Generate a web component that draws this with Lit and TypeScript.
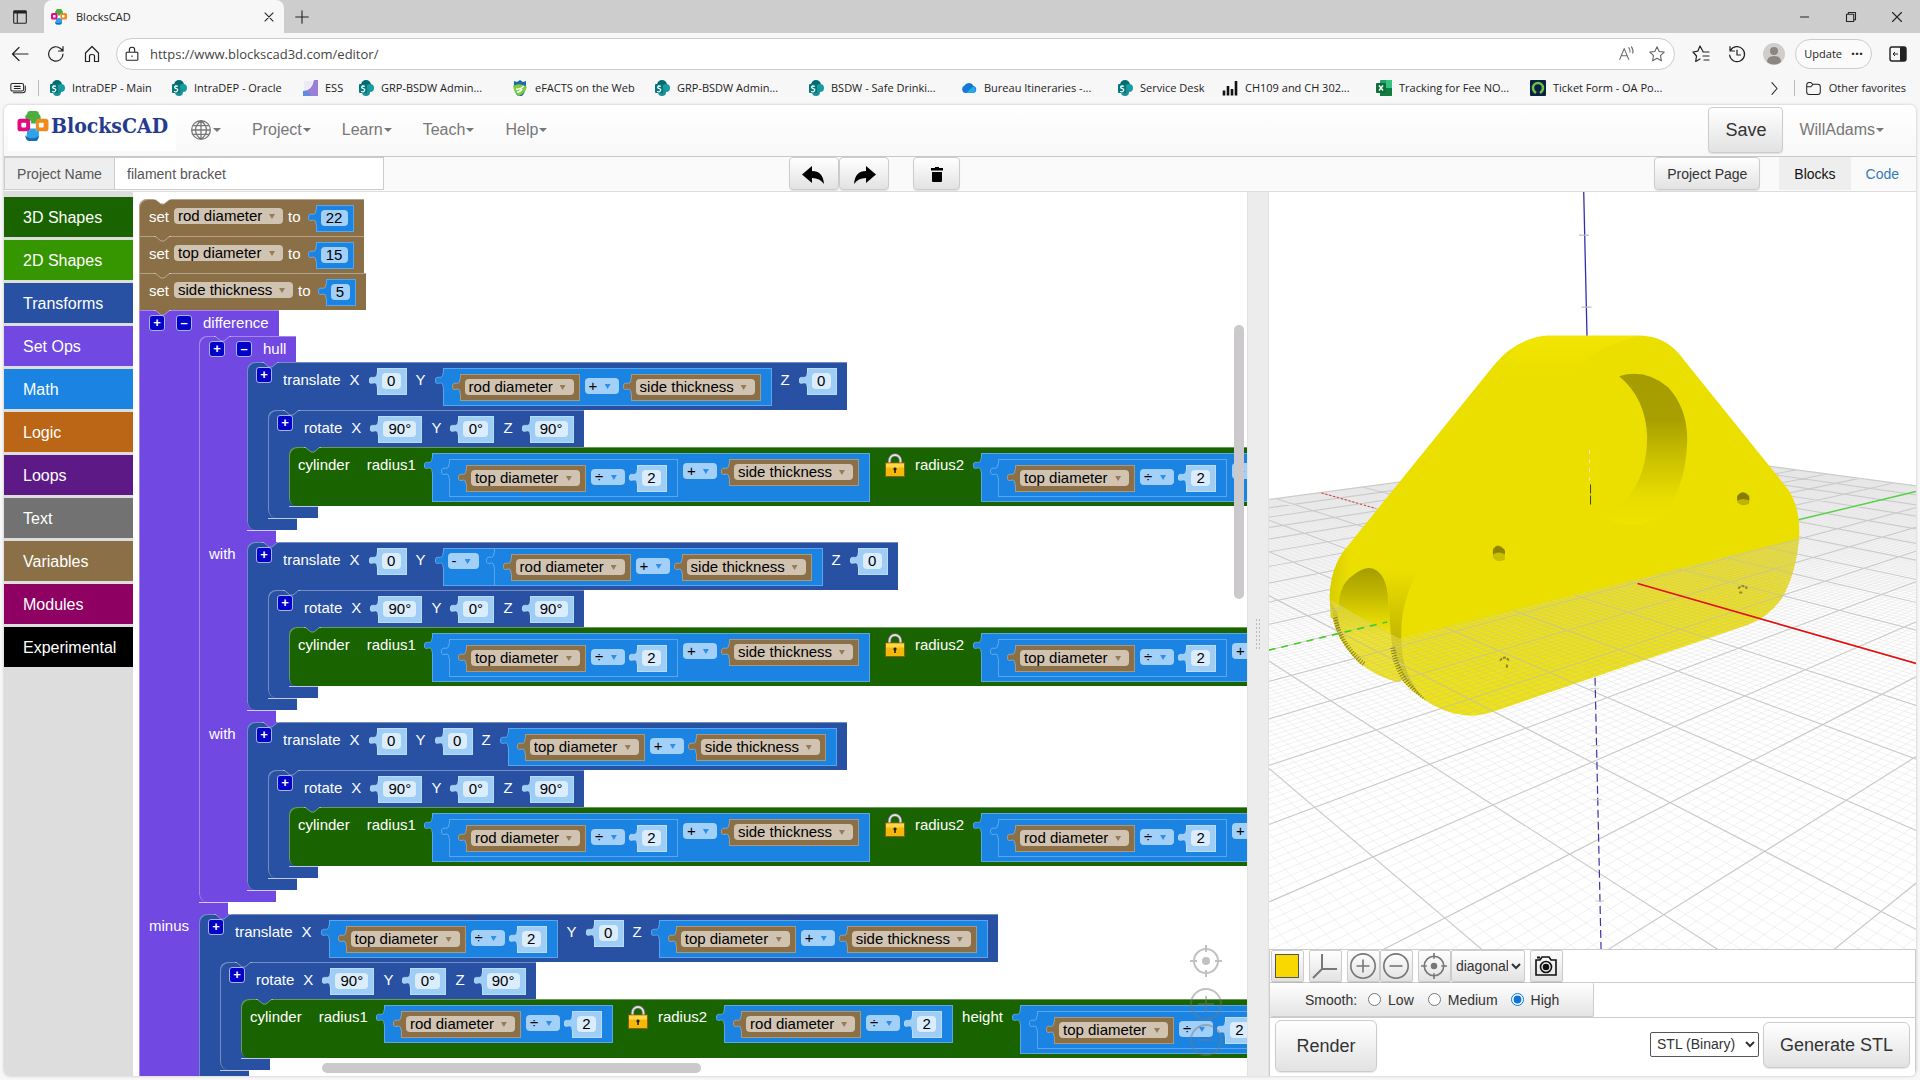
import { LitElement, html, svg, css, TemplateResult } from "lit";
import { customElement } from "lit/decorators.js";
import { styleMap } from "lit/directives/style-map.js";

type T = TemplateResult;

/* ---------- icons ---------- */
const logoMark = html`<svg class="mark" viewBox="0 0 32 32" aria-hidden="true">
  <path d="M10 3q0-3 3-3h6q3 0 3 3 2 1 2 4t-3 3h-2v3h-5v-3h-3q-3-1-3-4 0-2 2-3z" fill="#4aae3f"/>
  <rect x="0" y="8" width="13" height="13" rx="3" fill="#e5097f"/><rect x="4" y="12" width="5" height="5" rx="1" fill="#fff"/>
  <rect x="19" y="8" width="13" height="13" rx="3" fill="#f08a1c"/><rect x="22" y="12" width="5" height="5" rx="1" fill="#fff"/>
  <path d="M10 20h3v-2h6v2h3v7q-1 4-3 4h-6q-3 0-4-3z" fill="#2ea3e8"/><path d="M8 25q2 3 7 3t7-3q-1 6-4 6h-6q-4-1-4-6z" fill="#1c6ab5"/>
</svg>`;
const sharepoint = html`<svg class="fav" viewBox="0 0 16 16"><circle cx="8" cy="5" r="5" fill="#036c70"/><circle cx="12" cy="8" r="4" fill="#1a9ba1"/><circle cx="8" cy="12" r="4" fill="#1a8f94"/><rect x="1" y="4" width="8" height="9" rx="1" fill="#03787c"/><path d="M6.800 6.400q-2.600-1-3 .4t1.600 1.800 1 2.200-3.200.4" fill="none" stroke="#fff" stroke-width="1.300"/></svg>`;
const ess = html`<svg class="fav" viewBox="0 0 16 16"><path d="M12 0h4v16H1V11q9 0 11-11z" fill="#9a7fd6"/><path d="M1 11q6 0 8 5H1z" fill="#5d8de0"/><path d="M2 1l9 0Q9 9 2 10z" fill="#eceaf8"/></svg>`;
const efacts = html`<svg class="fav" viewBox="0 0 16 16"><path d="M2 1l3 1 3-2 3 2 3-1v4q0 7-4 11H6Q1 12 2 1z" fill="#1d6cab"/><path d="M1 6q7-4 14 1-2 6-8 9-5-3-6-10z" fill="#7fce3c"/><path d="M4 9q4 1 8-3M5 12q3 0 5-3" fill="none" stroke="#fff" stroke-width="1.500"/></svg>`;
const cloud = html`<svg class="fav" viewBox="0 0 16 16"><path d="M4 13a4 4 0 0 1-.5-7.500A5 5 0 0 1 12.500 6 3.600 3.600 0 0 1 12.500 13z" fill="#1478d4"/><path d="M5 13l7-6.500a3.500 3.500 0 0 1 .8 6.500z" fill="#28a8ea"/></svg>`;
const bars = html`<svg class="fav" viewBox="0 0 16 16"><path d="M2 15.500v-5M6 15.500V6M10 15.500V9M14 15.500V1" stroke="#111" stroke-width="2.600"/></svg>`;
const excel = html`<svg class="fav" viewBox="0 0 16 16"><rect x="4" y="0" width="12" height="16" rx="1" fill="#21a366"/><path d="M10 0h5q1 0 1 1v7h-6z" fill="#33c481"/><path d="M4 8h12v7q0 1-1 1H4z" fill="#107c41"/><rect x="0" y="3" width="10" height="10" rx="1" fill="#0f703b"/><path d="M3 5.500l4 5M7 5.500l-4 5" stroke="#fff" stroke-width="1.500"/></svg>`;
const okta = html`<svg class="fav" viewBox="0 0 16 16"><rect width="16" height="16" rx="1" fill="#0c2340"/><path d="M6 13Q3 11 3 8a5 5 0 0 1 10 0q0 3-3 5" fill="none" stroke="#6cc24a" stroke-width="2.400"/></svg>`;
const line = (d: string, cls = "ic") => html`<svg class=${cls} viewBox="0 0 20 20" fill="none" stroke="currentColor" stroke-width="1.200" stroke-linecap="round" stroke-linejoin="round" aria-hidden="true"><path d=${d}/></svg>`;
const targetIcon = html`<svg class="ctl" viewBox="0 0 32 32" fill="none" stroke="currentColor" stroke-width="2"><circle cx="16" cy="16" r="12"/><circle cx="16" cy="16" r="4" fill="currentColor" stroke="none"/><path d="M16 0v7M16 25v7M0 16h7M25 16h7"/></svg>`;
const plusIcon = html`<svg class="ctl" viewBox="0 0 32 32" fill="none" stroke="currentColor" stroke-width="2"><circle cx="16" cy="16" r="15"/><path d="M16 8v16M8 16h16"/></svg>`;
const minusIcon = html`<svg class="ctl" viewBox="0 0 32 32" fill="none" stroke="currentColor" stroke-width="2"><circle cx="16" cy="16" r="15"/><path d="M8 16h16"/></svg>`;
const padlock = html`<svg class="lock" viewBox="0 0 20 24" role="img" aria-label="locked"><path d="M4.500 13V7.500a5.500 5.500 0 0 1 11 0V13" fill="none" stroke="#6d6d6d" stroke-width="3.400"/><path d="M4.500 13V7.500a5.500 5.500 0 0 1 11 0V13" fill="none" stroke="#e2e2e2" stroke-width="1.800"/><rect x=".5" y="10" width="19" height="13.500" fill="#f5b70a" stroke="#8a6100"/><rect x="1" y="10.500" width="18" height="4" fill="#ffd84a"/><path d="M10 14.500a1.600 1.600 0 0 1 .8 3v2.500h-1.600v-2.500a1.600 1.600 0 0 1 .8-3z" fill="#222"/></svg>`;

/* ---------- data ---------- */
const bookmarks: { icon: T; text: string; span: number }[] = [
  { icon: sharepoint, text: "IntraDEP - Main", span: 122 },
  { icon: sharepoint, text: "IntraDEP - Oracle", span: 131 },
  { icon: ess, text: "ESS", span: 56 },
  { icon: sharepoint, text: "GRP-BSDW Admin...", span: 154 },
  { icon: efacts, text: "eFACTS on the Web", span: 142 },
  { icon: sharepoint, text: "GRP-BSDW Admin...", span: 154 },
  { icon: sharepoint, text: "BSDW - Safe Drinki...", span: 153 },
  { icon: cloud, text: "Bureau Itineraries -...", span: 156 },
  { icon: sharepoint, text: "Service Desk", span: 105 },
  { icon: bars, text: "CH109 and CH 302...", span: 154 },
  { icon: excel, text: "Tracking for Fee NO...", span: 154 },
  { icon: okta, text: "Ticket Form - OA Po...", span: 154 },
];
const categories: [string, string][] = [
  ["3D Shapes", "#196400"], ["2D Shapes", "#369600"], ["Transforms", "#2851a3"], ["Set Ops", "#7148e2"],
  ["Math", "#1b84e3"], ["Logic", "#bb6616"], ["Loops", "#5d1a87"], ["Text", "#727272"],
  ["Variables", "#8b7047"], ["Modules", "#8e0061"], ["Experimental", "#000000"],
];

/* ---------- block fields ---------- */
const variables = ["rod diameter", "top diameter", "side thickness"];
const varField = (name: string) => html`<span class="dd ${name.split(" ")[0]}"><select aria-label="variable">${variables.map((v) => html`<option ?selected=${v === name}>${v}</option>`)}</select></span>`;
const opField = (op: string) => html`<span class="dd op"><select aria-label="operator">${["+", "-", "×", "÷", "^"].map((v) => html`<option ?selected=${v === op}>${v}</option>`)}</select></span>`;
const tab = html`<svg class="tab" viewBox="0 0 9 20" aria-hidden="true"><path class="tabfill" d="M9 4.500H8C8 14 0 5 0 12.500S8 10 8 19.500h1z"/><path class="tabline" d="M8 4.500C8 14 .5 5 .5 12.500S8 10 8 19.500"/></svg>`;
const val = (kind: string, body: unknown) => html`<div class="val ${kind}">${tab}${body}</div>`;
const num = (n: string, pale = true) =>
  val(pale ? "pale" : "vivid", html`<input class="num n${n.length}" aria-label="number" .value=${n} value=${n} />`);
const vr = (name: string) => val("variable", varField(name));
const bin = (a: T, op: string, b: T) => val("math", html`${a}${opField(op)}${b}`);
const neg = (a: T) => val("math unary", html`<span class="dd sign"><select aria-label="function"><option>-</option><option>abs</option></select></span>${a}`);
const word = (t: string) => html`<span class="word">${t}</span>`;
const mut = (t: "+" | "–") => html`<button class="mut" aria-label=${t === "+" ? "Add input" : "Remove input"}>${t}</button>`;

/* ---------- statement blocks ---------- */
const notch = html`<svg class="notch" viewBox="0 0 17 6" aria-hidden="true"><path class="nfill" d="M1 0h15l-6 4.500H7z"/><path class="nline" d="M0 .5h1.500L7 5h3l5.500-4.500H17"/></svg>`;
const shape = (kind: string, head: unknown) => html`<div class="stmt ${kind}">${notch}<div class="head">${head}</div></div>`;
const wrap = (kind: string, head: unknown, arms: [string, T][]) => html`<div class="stmt ${kind}">${notch}
  <div class="head">${head}</div>
  ${arms.map(([label, child], i) => html`${i ? html`<div class="mid"></div>` : ""}<div class="arm"><div class="side">${label}</div><div class="kids">${child}</div></div>`)}
  <div class="foot"></div></div>`;
const setVar = (name: string, n: string) => shape("variable setter", html`${word("set")}${varField(name)}${word("to")}${num(n, false)}`);
const translate = (x: T, y: T, z: T, child: T) =>
  wrap("transform", html`${mut("+")}${word("translate")}${word("X")}${x}${word("Y")}${y}${word("Z")}${z}`, [["", child]]);
const rotate = (child: T) =>
  wrap("transform", html`${mut("+")}${word("rotate")}${word("X")}${num("90°")}${word("Y")}${num("0°")}${word("Z")}${num("90°")}`, [["", child]]);
const cylinder = (r: T, height: T) =>
  shape("solid", html`${word("cylinder")}<span class="word far">radius1</span>${r}${padlock}${word("radius2")}${r}${word("height")}${height}`);
const half = (name: string) => bin(vr(name), "÷", num("2"));
const thick = (a: T) => bin(a, "+", vr("side thickness"));

/* ---------- ground plane in perspective ---------- */
const O = [323.7, 378.3], VU = [-515, 137.4], VV = [1341, 128.6];
const den = (u: number, v: number) => 1 - 0.0048 * u + 0.00496 * v;
const proj = (u: number, v: number) => {
  const a = -0.0048 * u, b = 0.00496 * v, d = 1 + a + b;
  return ((O[0] + a * VU[0] + b * VV[0]) / d).toFixed(1) + " " + ((O[1] + a * VU[1] + b * VV[1]) / d).toFixed(1);
};
const gridPath = (step: number, skip: number) => {
  let d = "";
  for (let k = -100; k <= 100; k += step) {
    if (skip && k % skip === 0) continue;
    let hi = 100;
    while (den(hi, k) < 0.06) hi -= 1;
    d += `M${proj(-100, k)}L${proj(hi, k)}`;
    let lo = -100;
    while (den(k, lo) < 0.06) lo += 1;
    d += `M${proj(k, lo)}L${proj(k, 100)}`;
  }
  return d;
};
const minorGrid = gridPath(1, 10);
const majorGrid = gridPath(10, 0);
const bodyPath = "M277 143.500H374Q399 145 415 168L518 296Q530 312 530 340 528 378 513 405 500 424 479 432L227 518Q211 524 196 522.500 174 520 154 506 141 497 132.700 487L131 489.700Q112 486 91 471 74 454 67.700 438 61 420 61 404 62 375 77 356L225 173Q246 147 277 143.500Z";

const scene = svg`
  <defs>
    <linearGradient id="wall" x1="0" y1="0" x2="0" y2="1"><stop offset="0" stop-color="#a59c00"/><stop offset=".3" stop-color="#a89f00"/><stop offset=".55" stop-color="#c9bf00"/><stop offset=".8" stop-color="#e6db00"/><stop offset="1" stop-color="#efe300"/></linearGradient>
    <linearGradient id="slot" x1="0" y1="0" x2="0" y2="1"><stop offset="0" stop-color="#a69d00"/><stop offset=".2" stop-color="#bdb300"/><stop offset=".42" stop-color="#ddd200"/><stop offset=".6" stop-color="#f0e420"/><stop offset="1" stop-color="#ece020"/></linearGradient>
    <linearGradient id="rim" x1="0" y1="0" x2="0" y2="1"><stop offset="0" stop-color="#ebdf00"/><stop offset=".45" stop-color="#c9be00"/><stop offset="1" stop-color="#a49a1c"/></linearGradient>
    <linearGradient id="flank" x1="0" y1="0" x2="1" y2="0"><stop offset="0" stop-color="#d9ce00"/><stop offset=".25" stop-color="#ebdf00"/><stop offset="1" stop-color="#ebdf00"/></linearGradient>
    <linearGradient id="haze" x1="0" y1="0" x2="1" y2="-.35"><stop offset="0" stop-color="#f3e93c" stop-opacity=".35"/><stop offset=".7" stop-color="#efe54a" stop-opacity=".4"/><stop offset="1" stop-color="#eae28c" stop-opacity=".6"/></linearGradient>
    <linearGradient id="top" x1="0" y1="0" x2="0" y2="1"><stop offset="0" stop-color="#f2e500"/><stop offset="1" stop-color="#ebdf00"/></linearGradient>
    <linearGradient id="far" x1="0" y1="0" x2="0" y2="1"><stop offset="0" stop-color="#e9e9e9"/><stop offset="1" stop-color="#fff"/></linearGradient>
    <clipPath id="body"><path d=${bodyPath}/></clipPath>
    <clipPath id="low"><path d="M61 407L130 446 530 346V530H61Z"/></clipPath>
  </defs>
  <path d="M0 307L375 257 647 293.700V400L324 378 0 440Z" fill="url(#far)" opacity=".7"/>
  <path d=${minorGrid} class="minor"/>
  <path d=${majorGrid} class="major"/>
  <path d="M52.900 300.500L107 316" stroke="#d33" stroke-dasharray="2 2" fill="none"/>
  <path d="M529 327.300L647 299" stroke="#4fd43f" stroke-width="1.300" fill="none"/>
  <path d="M314.700 0L318 145" stroke="#3330b0" stroke-width="1.300" fill="none"/>
  <path d="M310 43h10M312.500 115h10" stroke="#bbb" stroke-width="1.200"/>
  <path d=${bodyPath} fill="#ebdf00"/>
  <path d="M277 143.500H374Q330 150 306 180H225Q246 147 277 143.500Z" fill="url(#top)"/>
  <path d="M77 356Q62 375 61 404L62 425 132 458 150 380Z" fill="url(#flank)"/>
  <path d="M350 184Q376 176 399 195 419 217 418 250 416 300 392 322 368 341 335 325 378 300 378 245 377 206 350 184Z" fill="url(#wall)"/>
  <path d="M61 408L67.700 438Q76 456 92 472L94 470Q77 455 71 438L69 420Z" fill="#b3a900"/>
  <path d="M70 425Q68 393 84 383 102 368 113 383 119 392 119.500 408L121.700 441 126 468 131 488Q108 486 92 470 72 450 70 425Z" fill="url(#slot)"/>
  <path d="M112 378Q119 390 119.500 405L122 441Q124 470 137 487 146 499 155 506 138 487 134 465 131 440 134 420 138 400 148 380Z" fill="url(#rim)"/>
  <path d="M224 356q5-7 12 1v10q-7 4-12-2z" fill="#c9be00"/><path d="M224 358q4-9 12 0l0 4q-6-4-12 0z" fill="#8d8500"/>
  <path d="M468 303q6-7 12 0v8q-6 4-12-1z" fill="#bfb500"/><path d="M468 304q5-8 12 0v4q-6-3-12 0z" fill="#857d00"/>
  <g clip-path="url(#body)"><g clip-path="url(#low)">
    <path d="M61 407L130 446 530 346V530H61Z" fill="url(#haze)"/>
    <path d=${minorGrid} class="minor over"/>
    <path d=${majorGrid} class="major over"/>
    <path d="M66 425Q73 454 96 472M124 455Q128 485 155 508" fill="none" stroke="#4e4a18" stroke-width="5" stroke-dasharray="1 1.600" opacity=".6"/>
  </g></g>
  <path d="M231 468q5-6 9 0M238 472v3M469 396q4-5 9 0M470 400h4" fill="none" stroke="#8d8630" stroke-width="2" stroke-dasharray="3 1"/>
  <path d="M0 457.600L118.500 429.400" stroke="#3fcf1f" stroke-width="1.600" stroke-dasharray="7 6" fill="none"/>
  <path d="M368.500 391L647 471" stroke="#e80f0f" stroke-width="1.700" fill="none"/>
  <path d="M320.500 258v30" stroke="#e9e7c8" stroke-dasharray="4 5" fill="none"/><path d="M321.500 292v22" stroke="#46461e" stroke-dasharray="9 2" fill="none"/>
  <path d="M326 485L332 756" stroke="#3a36a8" stroke-width="1.200" stroke-dasharray="8 4" fill="none"/>
  <path d="M321 496h9M322 553h9M324 607h9M326 708h9" stroke="#ccc"/>
`;

@customElement("app-root")
export class AppRoot extends LitElement {
  static styles = css`
    :host { display: flex; flex-direction: column; height: 100vh; background: #f7f7f7; font: 14px/20px "Liberation Sans", Arial, sans-serif; color: #333; overflow: hidden; }
    * { box-sizing: border-box; }
    button, input, select { font: inherit; color: inherit; margin: 0; }
    button { padding: 0; cursor: pointer; }
    a { text-decoration: none; color: inherit; }
    svg { display: block; flex: none; }
    .browser { font: 12px/16px "Open Sans", "Noto Sans", sans-serif; color: #222; }
    .browser button { background: none; border: 0; display: flex; }
    .tabs { display: flex; align-items: center; height: 33px; background: #cdcdcd; padding-left: 11px; }
    .tabs .ic { width: 18px; height: 18px; }
    .tabcard { display: flex; align-items: center; gap: 9px; align-self: stretch; width: 240px; margin: 0 9px 0 15px; padding: 0 6px 0 7px; background: #f7f7f7; border-radius: 8px 8px 0 0; font-size: 11px; }
    .tabcard .mark { width: 16px; height: 16px; }
    .tabcard span { flex: 1; }
    .wins { display: flex; gap: 28px; margin-left: auto; padding-right: 14px; }
    .bar { display: flex; align-items: center; gap: 16px; height: 42px; padding: 0 12px 0 10px; }
    .bar .ic { width: 20px; height: 20px; }
    .url { flex: 1; display: flex; align-items: center; gap: 9px; height: 32px; margin-left: -2px; padding: 0 8px 0 6px; background: #fff; border: 1px solid #ccc; border-radius: 16px; }
    .url .ic { width: 18px; height: 18px; }
    .url button { color: #666; margin-left: 4px; }
    .url input { flex: 1; border: 0; background: none; outline: 0; font-size: 13px; color: #444; padding: 0; }
    .bar .upd { display: flex; align-items: center; gap: 9px; height: 30px; padding: 0 8px; border: 1px solid #ccc; border-radius: 15px; background: #fbfbfb; margin: 0 0 0 -6px; font-size: 11px; }
    .upd b { font-size: 14px; }
    .me { width: 22px; height: 22px; }
    .marks { display: flex; align-items: center; height: 30px; padding: 0 14px 4px 10px; font-size: 11px; color: #222; white-space: nowrap; }
    .marks .sep { width: 1px; height: 16px; background: #bbb; margin: 0 10px 0 11px; }
    .marks a { display: flex; align-items: center; gap: 7px; min-width: 0; }
    .fav { width: 16px; height: 16px; }
    .marks .ic { width: 17px; height: 17px; }
    .marks .more { margin-left: auto; }

    .page { flex: 1; min-height: 0; display: flex; flex-direction: column; margin: 0 4px 4px; background: #fff; border-radius: 6px; overflow: hidden; box-shadow: 0 0 3px #bbb; }
    .nav { display: flex; align-items: center; height: 52px; flex: none; background: linear-gradient(#fff, #f8f8f8); border-bottom: 1px solid #c8c8c8; padding: 0 32px 2px 4px; font-size: 16px; color: #777; }
    .brand { display: flex; align-items: center; gap: 2px; height: 42px; width: 168px; margin-right: 14px; padding: 0 0 7px 9px; background: #fff; }
    .brand .mark { width: 32px; height: 31px; }
    .brand span { font: bold 21px/28px "DejaVu Serif Condensed", "DejaVu Serif", serif; color: #243b8e; }
    .nav button.menu { display: flex; align-items: center; border: 0; background: none; margin-right: 31px; }
    .menu::after { content: ""; border: 4px solid transparent; border-top-color: currentColor; border-bottom: 0; margin-left: 1px; }
    .nav .globe .ic { width: 22px; height: 22px; }
    .nav .save { margin-left: auto; margin-right: 16px; }
    .nav button.user { margin-right: 0; }
    .btn { border: 1px solid #ccc; border-radius: 4px; background: linear-gradient(#fff, #e2e2e2); color: #333; display: flex; align-items: center; justify-content: center; box-shadow: 0 1px 1px rgba(0,0,0,.1); }
    .save { width: 75px; height: 46px; font-size: 18px; }
    .sub { display: flex; align-items: stretch; height: 35px; flex: none; background: #fafafa; border-bottom: 1px solid #ddd; padding: 0 2px 1px 0; color: #555; }
    .name { flex: 0 0 41%; display: flex; margin-right: 2px; }
    .name label { width: 111px; border: 1px solid #ccc; background: #eee; line-height: 32px; text-align: center; }
    .name input { width: 269px; border: 1px solid #ccc; border-left: 0; padding: 0 12px; background: #fff; outline: 0; }
    .sub .btn { width: 50px; }
    .sub .trash { width: 47px; margin-left: 24px; }
    .sub .pp { width: 106px; margin-left: auto; margin-right: 19px; }
    .sub a { padding: 0 15px; line-height: 35px; color: #337ab7; }
    .sub a.on { background: #eee; color: #111; }
    .sub .btn .ic { width: 24px; height: 24px; color: #000; }

    .main { flex: 1; min-height: 0; display: flex; }
    .toolbox { flex: 0 0 129px; background: #ddd; padding-top: 5px; display: flex; flex-direction: column; gap: 3px; }
    .toolbox button { height: 40px; border: 0; color: #fff; font-size: 16px; text-align: left; padding: 1px 0 0 19px; flex: none; }
    .work { flex: 1; min-width: 0; position: relative; overflow: hidden; padding: 7px 0 0 6px; background: #fff; }
    .split { flex: 0 0 22px; background: #ececec; border: solid #e2e2e2; border-width: 0 1px; display: flex; align-items: center; justify-content: center; }
    .grip { width: 6px; height: 32px; background: radial-gradient(#bbb 1px, transparent 1px) 0 0 / 3px 4px; }

    .stack { display: flex; flex-direction: column; align-items: flex-start; width: max-content; font-size: 15px; --prev: #fff; }
    .stack > .stmt + .stmt { --prev: #8b7047; }
    .variable { --c: #8b7047; --f: #d1c3b1; --a: #8b7047; }
    .transform { --c: #2851a3; --in: 21px; }
    .solid { --c: #196400; }
    .setop { --c: #7148e2; --in: 60px; }
    .hull { --in: 48px; }
    .math { --c: #1b84e3; --f: #a3d0f8; --a: #1b84e3; }
    .vivid { --c: #1b84e3; --f: #a3d0f8; }
    .pale { --c: #9ecdf5; --f: #dbedfc; }
    .stmt { position: relative; display: flex; flex-direction: column; align-items: flex-start; }
    .head { display: flex; align-items: flex-start; min-height: 26px; padding: 6px 10px 4px 9px; background: var(--c); border-radius: 8px 0 0 0; box-shadow: inset 1px 1px rgba(255,255,255,.35); }
    .solid > .head { border-radius: 8px 0 0 8px; }
    .stack > .stmt + .stmt > .head, .setter + .setter > .head { border-top-left-radius: 0; }
    .arm { --edge: calc(var(--in) + 12px); display: flex; background: linear-gradient(var(--c), var(--c)) 0 0 / var(--edge) 100% no-repeat; box-shadow: inset 1px 0 rgba(255,255,255,.35); }
    .side { width: var(--in); flex: none; padding-left: 10px; line-height: 24px; color: #fff; }
    .kids { --prev: var(--c); }
    .mid, .foot { width: calc(var(--in) + 29px); height: 12px; background: linear-gradient(90deg, transparent var(--in), rgba(255,255,255,.7) var(--in)) 0 0 / 100% 1px no-repeat var(--c); box-shadow: inset 1px 0 rgba(255,255,255,.35); }
    .foot { border-radius: 0 0 0 8px; }
    .notch { position: absolute; left: 15px; top: 0; width: 17px; height: 6px; z-index: 1; }
    .nfill { fill: var(--prev); }
    .nline { fill: none; stroke: rgba(255,255,255,.4); }
    .word { color: #fff; line-height: 24px; margin-right: 9px; white-space: nowrap; }
    .setter .word { line-height: 24px; margin-right: 5px; }
    .setter .word:first-child { margin-left: 1px; }
    .setter .head > .dd { margin: 3px 5px 0 0; }
    .setter .val { margin-left: 10px; }
    .setop > .head { height: 26px; padding: 5px 10px 0; }
    .setop > .head .word { line-height: 16px; margin: 0; }
    .mut { width: 16px; height: 16px; margin: -1px 11px 0 0; border: 1px solid #a9b4e6; border-radius: 3px; background: #0202c8; color: #fff; font: bold 13px/12px "Liberation Sans", sans-serif; flex: none; }
    .setop > .head > .mut { margin-top: 0; }
    .val { position: relative; display: flex; align-items: flex-start; margin-left: 8px; background: var(--c); box-shadow: inset 0 0 0 1px rgba(255,255,255,.28); flex: none; }
    .val + .word { margin-left: 9px; }
    .tab { position: absolute; left: -8px; top: 0; width: 9px; height: 20px; }
    .tabfill { fill: var(--c); }
    .tabline { fill: none; stroke: rgba(255,255,255,.3); }
    .pale, .vivid, .val.variable { height: 27px; padding: 5px 6px 0 5px; }
    .val.math { padding: 6px 11px 5px 17px; margin-left: 8px; }
    .val.math > .val { margin-left: 0; }
    .val.math > .dd { margin: 4px 12px 0 5px; }
    .val.math > .val.math { margin-left: 0; }
    .val.math.unary { padding: 0; }
    .val.math.unary > .dd { margin: 5px 15px 0 5px; }
    .num { height: 16px; border: 0; border-radius: 4px; background: var(--f); color: #000; text-align: center; padding: 0; font-size: 15px; line-height: 16px; outline: 0; }
    .n1 { width: 19px; } .n2 { width: 27px; } .n3 { width: 33px; }
    .pale .n2 { width: 25px; }
    .dd { position: relative; height: 16px; border-radius: 4px; background: var(--f); flex: none; }
    .dd::after { content: ""; position: absolute; right: 8px; top: 6px; width: 6px; height: 5px; background: var(--a); clip-path: polygon(0 0, 100% 0, 50% 100%); opacity: .85; pointer-events: none; }
    .dd select { appearance: none; display: block; width: 100%; height: 16px; border: 0; background: none; padding: 0 0 0 4px; color: #000; line-height: 16px; outline: 0; }
    .rod, .top { width: 109px; }
    .dd.side { width: 119px; padding: 0; line-height: 16px; }
    .op { width: 34px; } .sign { width: 31px; }
    .lock { width: 20px; height: 24px; margin: 0 10px 0 15px; }
    .far { margin: 0 8px; }
    .sb { position: absolute; background: #cbc9cb; border-radius: 5px; }
    .sbv { right: 3px; top: 15%; width: 10px; height: 31%; }
    .sbh { left: 17%; bottom: 3px; height: 10px; width: 34%; }
    .zoom { position: absolute; right: 25px; bottom: 20px; display: flex; flex-direction: column; align-items: center; gap: 4px; }
    .zoom button { border: 0; background: none; color: #777; opacity: .45; }
    .zoom button:first-child { margin-bottom: 7px; }
    .zoom .ctl { width: 32px; height: 32px; }

    .view { flex: 0 0 34%; display: flex; flex-direction: column; min-width: 0; margin-right: -3px; padding-right: 3px; }
    .scene { flex: 1; min-height: 0; width: 100%; }
    .minor { fill: none; stroke: #e3e3e3; stroke-width: .5; }
    .major { fill: none; stroke: #cbcbcb; stroke-width: 1.200; }
    .minor.over { stroke: #d9d05e; stroke-width: .7; }
    .major.over { stroke: #d3cb70; stroke-width: 1.500; }
    .tools { display: flex; height: 34px; border: 1px solid #ccc; gap: 5px; padding-left: 1px; flex: none; }
    .tools .btn { width: 33px; color: #777; border-radius: 2px; }
    .tools .grp { display: flex; }
    .tools .ctl { width: 26px; height: 26px; }
    .tools .sel { width: 74px; }
    .sel select { border: 0; background: none; outline: 0; color: #333; width: 72px; padding: 0; }
    .swatch { width: 24px; height: 24px; background: #f8d800; border: 1px solid #555; }
    .smooth { border: solid #ccc; border-width: 0 1px 1px; flex: none; }
    .smooth fieldset { margin: 0; width: 50%; height: 34px; min-width: 324px; border: 1px solid #ccc; border-width: 0 1px 1px 0; border-radius: 2px; padding: 0 0 0 35px; display: flex; align-items: center; background: linear-gradient(#fff, #e4e4e4); }
    .smooth label { display: flex; align-items: center; gap: 7px; margin-left: 11px; margin-right: 3px; }
    .smooth label:last-child { margin-left: 10px; }
    .smooth input { width: 13px; height: 13px; accent-color: #0b74d9; }
    .out { display: flex; align-items: center; height: 58px; border: solid #ccc; border-width: 0 1px; padding: 0 5px 2px 5px; flex: none; }
    .out .btn { font-size: 18px; border-radius: 6px; height: 52px; width: 102px; }
    .out .gen { width: 147px; height: 46px; margin-bottom: 2px; }
    .out select { margin: 0 4px 4px auto; height: 25px; width: 109px; border: 1px solid #555; border-radius: 2px; background: #fff; padding: 0 2px; }
  `;

  private chrome() {
    return html`<header class="browser">
      <div class="tabs">
        <button aria-label="Tab actions">${line("M4 3h12q1 0 1 1v12q0 1-1 1H4q-1 0-1-1V4q0-1 1-1zM3 5.500h14M3 4.300h14M7 6v11")}</button>
        <div class="tabcard">${logoMark}<span>BlocksCAD</span><button aria-label="Close tab">${line("M5.500 5.500l9 9M14.500 5.500l-9 9")}</button></div>
        <button aria-label="New tab">${line("M10 3v14M3 10h14")}</button>
        <div class="wins">
          <button aria-label="Minimize">${line("M5 10h9")}</button>
          <button aria-label="Restore">${line("M5 7h8v8H5zM7 7V5h8v8h-2")}</button>
          <button aria-label="Close">${line("M5 5l10 10M15 5L5 15")}</button>
        </div>
      </div>
      <div class="bar">
        <button aria-label="Back">${line("M18 10H3M9 3.500L2.500 10 9 16.500")}</button>
        <button aria-label="Refresh">${line("M17 10a7.200 7.200 0 1 1-2.500-5.500L17 7M17 2.500V7h-4.500")}</button>
        <button aria-label="Home">${line("M3.500 9L10 2.500 16.500 9v8.500h-4V12q0-1.500-2.500-1.500T7.500 12v5.500h-4z")}</button>
        <div class="url">
          ${line("M4.500 8h11q1 0 1 1v7q0 1-1 1h-11q-1 0-1-1V9q0-1 1-1zM7 8V5.500a3 3 0 0 1 6 0V8M10 12v.8")}
          <input aria-label="Address" value="https://www.blockscad3d.com/editor/" />
          <button aria-label="Read aloud">${line("M3 16L8 4l5 12M5 12h6M13 3q2 2 1.500 5M16 2q2.500 3 1.500 7")}</button>
          <button aria-label="Add to favorites">${line("M10 2l2.400 5.200 5.600.7-4.100 3.900 1 5.700L10 14.700l-4.900 2.800 1-5.700L2 7.900l5.600-.7z")}</button>
        </div>
        <button aria-label="Favorites">${line("M12 7.500L9 2 6.800 7.200 2 8l3.500 4-.8 5.500L9 15M12 8h6M12 12h6M13 16h5")}</button>
        <button aria-label="History">${line("M3.500 6.500A7.500 7.500 0 1 1 2.600 11M3 2.500v4.500h4.500M10 6v5h3.500")}</button>
        <button aria-label="Profile"><svg class="me" viewBox="0 0 22 22"><circle cx="11" cy="11" r="11" fill="#d0cdca"/><circle cx="11" cy="8" r="4" fill="#8a8683"/><path d="M4 19q0-6 7-6t7 6q-7 5-14 0z" fill="#8a8683"/></svg></button>
        <button class="upd">Update<b>···</b></button>
        <button aria-label="Sidebar"><svg class="ic" viewBox="0 0 20 20"><rect x="2" y="3" width="16" height="14" rx="2" fill="none" stroke="#222" stroke-width="1.400"/><path d="M12 3h4q2 0 2 2v10q0 2-2 2h-4z" fill="#222"/><path d="M10 10H5M7 8l-2 2 2 2" fill="none" stroke="#222"/></svg></button>
      </div>
      <nav class="marks">
        <button aria-label="Workspaces">${line("M3 4h11q2 0 2 2v5q0 2-2 2H3q-2 0-2-2V6q0-2 2-2zM5 7.500h7M5 10h7M18 7v5q0 3-3 3H4")}</button><i class="sep"></i>
        ${bookmarks.map((b) => html`<a href="#" style=${styleMap({ width: b.span + "px" })}>${b.icon}${b.text}</a>`)}
        <button class="more" aria-label="More bookmarks">${line("M7 3l6 7-6 7")}</button><i class="sep"></i>
        <a href="#">${line("M2 6q0-3 3-3h2l2 2h6q3 0 3 3v6q0 3-3 3H5q-3 0-3-3zM2 8h5l2-2.500")}Other favorites</a>
      </nav>
    </header>`;
  }

  private blocks() {
    return html`<div class="stack">
      ${setVar("rod diameter", "22")}${setVar("top diameter", "15")}${setVar("side thickness", "5")}
      ${wrap("setop", html`${mut("+")}${mut("–")}${word("difference")}`, [
        ["", wrap("setop hull", html`${mut("+")}${mut("–")}${word("hull")}`, [
          ["", translate(num("0"), thick(vr("rod diameter")), num("0"), rotate(cylinder(thick(half("top diameter")), num("5"))))],
          ["with", translate(num("0"), neg(thick(vr("rod diameter"))), num("0"), rotate(cylinder(thick(half("top diameter")), num("5"))))],
          ["with", translate(num("0"), num("0"), thick(vr("top diameter")), rotate(cylinder(thick(half("rod diameter")), num("5"))))],
        ])],
        ["minus", translate(half("top diameter"), num("0"), thick(vr("top diameter")), rotate(cylinder(half("rod diameter"), thick(half("top diameter")))))],
      ])}
    </div>`;
  }

  render() {
    return html`${this.chrome()}
    <div class="page">
      <nav class="nav">
        <a class="brand" href="#">${logoMark}<span>BlocksCAD</span></a>
        <button class="menu globe" aria-label="Language">${line("M10 1.500a8.500 8.500 0 1 0 0 17 8.500 8.500 0 0 0 0-17zM10 1.500v17M1.500 10h17M3 6h14M3 14h14M10 1.500q-5 4-5 8.500t5 8.500q5-4 5-8.500t-5-8.500")}</button>
        ${["Project", "Learn", "Teach", "Help"].map((t) => html`<button class="menu">${t}</button>`)}
        <button class="btn save">Save</button>
        <button class="menu user">WillAdams</button>
      </nav>
      <div class="sub">
        <div class="name"><label for="pname">Project Name</label><input id="pname" value="filament bracket" /></div>
        <button class="btn" aria-label="Undo"><svg class="ic" viewBox="0 0 24 24"><path d="M10 4v5q11 0 12 13-4-6-12-6v5L0 12.500z" fill="#000"/></svg></button>
        <button class="btn" aria-label="Redo"><svg class="ic" viewBox="0 0 24 24"><path d="M14 4v5Q3 9 2 22q4-6 12-6v5l10-8.500z" fill="#000"/></svg></button>
        <button class="btn trash" aria-label="Delete"><svg class="ic" viewBox="0 0 24 24"><path d="M6 6h4V5h4v1h4v2.500H6zM7 10h10v9q0 1-1 1H8q-1 0-1-1z" fill="#000"/></svg></button>
        <button class="btn pp">Project Page</button>
        <a href="#" class="on">Blocks</a><a href="#">Code</a>
      </div>
      <div class="main">
        <div class="toolbox">${categories.map(([t, c]) => html`<button style=${styleMap({ background: c })}>${t}</button>`)}</div>
        <div class="work">
          ${this.blocks()}
          <div class="sb sbv"></div><div class="sb sbh"></div>
          <div class="zoom"><button aria-label="Center">${targetIcon}</button><button aria-label="Zoom in">${plusIcon}</button><button aria-label="Zoom out">${minusIcon}</button></div>
        </div>
        <div class="split"><div class="grip"></div></div>
        <div class="view">
          <svg class="scene" viewBox="0 0 647 756" preserveAspectRatio="xMidYMid slice" role="img" aria-label="Rendered model">${scene}</svg>
          <div class="tools">
            <button class="btn" aria-label="Colour"><span class="swatch"></span></button>
            <button class="btn" aria-label="Toggle axes"><svg class="ctl" viewBox="0 0 26 26" fill="none" stroke="#777" stroke-width="2"><path d="M10 1v15h15M10 16L1 25"/></svg></button>
            <div class="grp"><button class="btn" aria-label="Zoom in">${plusIcon}</button><button class="btn" aria-label="Zoom out">${minusIcon}</button></div>
            <div class="grp"><button class="btn" aria-label="Reset view">${targetIcon}</button><span class="btn sel"><select aria-label="View"><option>diagonal</option><option>front</option><option>top</option></select></span></div>
            <button class="btn" aria-label="Take picture"><svg class="ctl" viewBox="0 0 26 26" fill="none" stroke="#111" stroke-width="1.600"><path d="M3 7h4l2-3h7l2 3h5v15H3z"/><circle cx="13" cy="14" r="5.500"/><circle cx="13" cy="14" r="2.500" fill="#111"/><path d="M4 4.500h3" stroke-width="2"/></svg></button>
          </div>
          <div class="smooth"><fieldset>Smooth:
            <label><input type="radio" name="q" />Low</label><label><input type="radio" name="q" />Medium</label><label><input type="radio" name="q" checked />High</label>
          </fieldset></div>
          <div class="out"><button class="btn">Render</button><select aria-label="Format"><option>STL (Binary)</option><option>OBJ</option></select><button class="btn gen">Generate STL</button></div>
        </div>
      </div>
    </div>`;
  }
}
